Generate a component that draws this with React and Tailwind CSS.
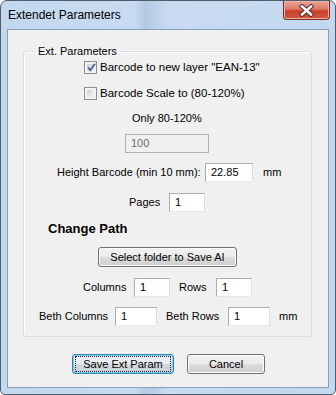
import React from 'react';

const font = "font-['Liberation_Sans',Arial,sans-serif]";

function CheckBox({ checked }) {
  return (
    <span className="relative flex h-[13px] w-[13px] shrink-0 border border-[#8e8f8f] bg-[#f4f4f4] p-[2px]">
      <span className="flex-1 bg-[linear-gradient(135deg,#c9ccd1_0%,#e4e6e9_55%,#f7f7f7_100%)]" />
      {checked && (
        <svg className="absolute left-[1px] top-[0px]" width="11" height="11" viewBox="0 0 11 11">
          <path d="M2 5.5 L4.4 8.2 L9 1.8" fill="none" stroke="#4a5d94" strokeWidth="1.8" />
        </svg>
      )}
    </span>
  );
}

function Field({ value, w, disabled }) {
  return (
    <div
      className={`flex h-[19px] items-center border pl-[5px] text-[11px] ${
        disabled
          ? 'border-[#adb2b5] bg-[#f0f0f0] text-[#6d6d6d]'
          : 'border-[#abadb3] border-b-[#e3e9ef] border-r-[#dbdfe6] bg-white text-black'
      } ${w}`}
    >
      {value}
    </div>
  );
}

function WinButton({ children, w, isDefault }) {
  return (
    <button
      type="button"
      className={`flex h-[20px] items-center justify-center rounded-[3px] border text-[11px] text-black ${w} ${
        isDefault
          ? 'border-[#3c7fb1] bg-[linear-gradient(180deg,#eef1f3_0%,#e8ebee_50%,#d6dadf_50%,#c9cfd5_100%)] shadow-[inset_0_0_0_1px_#7ed0f0]'
          : 'border-[#707070] bg-[linear-gradient(180deg,#f2f2f2_0%,#ebebeb_50%,#dddddd_50%,#cfcfcf_100%)] shadow-[inset_0_0_0_1px_#fcfcfc]'
      }`}
    >
      {isDefault ? (
        <span className="flex h-[14px] w-[94px] items-center justify-center outline-1 outline-dotted outline-[#222]">
          {children}
        </span>
      ) : (
        children
      )}
    </button>
  );
}

export default function App() {
  return (
    <div className={`h-[395px] w-[336px] bg-white ${font}`}>
      <div className="flex h-full w-full flex-col rounded-t-[7px] rounded-b-[5px] border border-[#4e5d6e] bg-[linear-gradient(90deg,#c3d8ef_0%,#c8dbf0_40%,#b3cae3_43%,#bad0e8_46%,#c8dbf0_50%,#c3d8ef_100%)]">
        {/* title bar */}
        <div className="flex h-[28px] items-start">
          <span className="pl-[7px] pt-[7px] text-[12px] leading-[14px] text-black">Extendet Parameters</span>
          <div className="ml-auto mr-[5px] flex h-[19px] w-[47px] items-center justify-center rounded-b-[4px] border border-t-0 border-[#7b2c22] bg-[linear-gradient(180deg,#e9a596_0%,#dc7a66_45%,#c8412c_55%,#d2573f_100%)] shadow-[inset_0_0_0_1px_#efb2a5]">
            <svg width="15" height="13" viewBox="0 0 15 13">
              <path d="M3 2.5 L12 10.5 M12 2.5 L3 10.5" stroke="#4a2a25" strokeWidth="4.4" strokeLinecap="square" />
              <path d="M3 2.5 L12 10.5 M12 2.5 L3 10.5" stroke="#ffffff" strokeWidth="2.6" strokeLinecap="square" />
            </svg>
          </div>
        </div>

        {/* client area */}
        <div className="mx-[6px] flex h-[359px] flex-col border border-[#8a9fba] bg-[#f0f0f0]">
          <fieldset className="ml-[15px] mr-[16px] mt-[14px] rounded-[3px] border border-[#d5dfe5] pb-[10px] shadow-[inset_1px_1px_0_#fff]">
            <legend className="ml-[11px] px-[3px] text-[11px] leading-[14px] text-black">Ext. Parameters</legend>

            <div className="mt-[3px] flex h-[13px] items-center pl-[60px]">
              <CheckBox checked />
              <span className="ml-[3px] text-[11.5px] text-black">Barcode to new layer "EAN-13"</span>
            </div>
            <div className="mt-[13px] flex h-[13px] items-center pl-[60px]">
              <CheckBox />
              <span className="ml-[3px] text-[11.5px] text-black">Barcode Scale to (80-120%)</span>
            </div>
            <div className="mt-[11px] flex h-[14px] items-center pl-[108px] text-[11px]">Only 80-120%</div>
            <div className="mt-[9px] flex pl-[101px]">
              <Field value="100" w="w-[84px]" disabled />
            </div>
            <div className="mt-[10px] flex items-center pl-[33px] text-[11px]">
              <span className="w-[148px]">Height Barcode (min 10 mm):</span>
              <Field value="22.85" w="w-[48px]" />
              <span className="ml-[10px]">mm</span>
            </div>
            <div className="mt-[11px] flex items-center pl-[105px] text-[11px]">
              <span className="w-[40px]">Pages</span>
              <Field value="1" w="w-[36px]" />
            </div>
            <div className="mt-[10px] flex h-[14px] items-center pl-[24px] text-[13px] font-bold">Change Path</div>
            <div className="mt-[11px] flex pl-[74px]">
              <WinButton w="w-[139px] h-[19px]">Select folder to Save AI</WinButton>
            </div>
            <div className="mt-[11px] flex items-center pl-[59px] text-[11px]">
              <span className="w-[51px]">Columns</span>
              <Field value="1" w="w-[36px]" />
              <span className="ml-[9px] w-[37px]">Rows</span>
              <Field value="1" w="w-[36px]" />
            </div>
            <div className="mt-[10px] flex items-center pl-[15px] text-[11px]">
              <span className="w-[76px]">Beth Columns</span>
              <Field value="1" w="w-[42px]" />
              <span className="ml-[9px] w-[62px]">Beth Rows</span>
              <Field value="1" w="w-[42px]" />
              <span className="ml-[9px]">mm</span>
            </div>
          </fieldset>

          <div className="mt-[17px] flex gap-[13px] pl-[64px]">
            <WinButton w="w-[102px]" isDefault>Save Ext Param</WinButton>
            <WinButton w="w-[78px]">Cancel</WinButton>
          </div>
        </div>
      </div>
    </div>
  );
}
